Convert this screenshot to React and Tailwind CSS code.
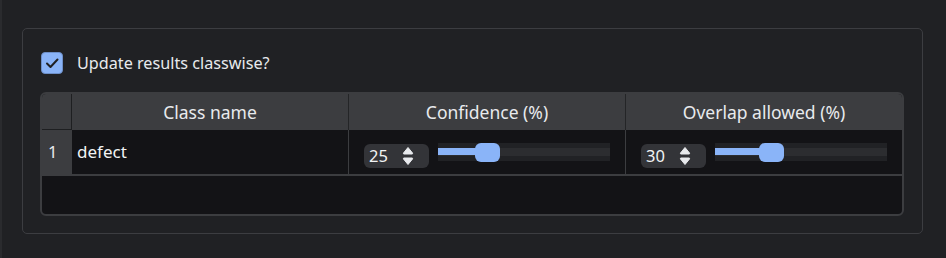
import React from "react";

const font = { fontFamily: '"Noto Sans", "Open Sans", sans-serif' };

function SpinBox({ value }) {
  return (
    <div className="mt-[8px] w-[65px] h-[24px] rounded-[6px] bg-[#333438] flex items-center justify-between pl-[5px] pr-[15px] shrink-0">
      <span className="text-[16.5px] text-[#f1f3f4] leading-none">{value}</span>
      <svg width="12" height="20" viewBox="0 0 12 20">
        <path d="M6 1.5 L10.5 7 Q11 8 10 8 L2 8 Q1 8 1.5 7 Z" fill="#e8eaed" stroke="#e8eaed" strokeWidth="1" strokeLinejoin="round" />
        <path d="M6 18.5 L10.5 13 Q11 12 10 12 L2 12 Q1 12 1.5 13 Z" fill="#e8eaed" stroke="#e8eaed" strokeWidth="1" strokeLinejoin="round" />
      </svg>
    </div>
  );
}

function Slider({ value }) {
  const travel = 172 - 25;
  const left = Math.round((value / 100) * travel);
  return (
    <div className="relative w-[172px] h-[18px] bg-[#212225] shrink-0">
      <div className="absolute left-0 right-0 top-[5px] h-[8px] bg-[#2c2d30]" />
      <div className="absolute left-0 top-[5px] h-[7px] bg-[#8ab4f8]" style={{ width: left + 4 }} />
      <div
        className="absolute top-0 w-[25px] h-[19px] rounded-[6px] bg-[#8ab4f8]"
        style={{ left }}
      />
    </div>
  );
}

export default function App() {
  return (
    <div
      className="w-[946px] h-[258px] bg-[#202124] border-l-[2px] border-[#2a2b2e] pl-[20px] pt-[28px] overflow-hidden"
      style={font}
    >
      <div className="w-[901px] h-[206px] border border-[#3c3d41] rounded-[5px] pt-[23px] pl-[17px]">
        <div className="flex items-center gap-[14px] ml-[1px] h-[22px]">
          <div className="w-[22px] h-[22px] rounded-[4px] bg-[#8ab4f8] border border-[#6d8fc8] flex items-center justify-center">
            <svg width="16" height="16" viewBox="0 0 16 16">
              <path d="M3 8.5 L6.5 12 L13.5 4.5" fill="none" stroke="#202124" strokeWidth="2" strokeLinecap="round" strokeLinejoin="round" />
            </svg>
          </div>
          <span className="text-[16.2px] text-[#e8eaed] leading-none">Update results classwise?</span>
        </div>

        <div className="mt-[18px] w-[864px] h-[124px] border-2 border-[#3c3d40] rounded-[6px] bg-[#131316] overflow-hidden flex flex-col">
          {/* header */}
          <div className="flex h-[36px] bg-[#3c3d40] shrink-0">
            <div className="w-[30px] border-r border-b border-[#1e1f21]" />
            <div className="w-[277px] border-r border-[#242527] flex items-center justify-center text-[17.5px] text-[#e8eaed]">
              Class name
            </div>
            <div className="w-[277px] border-r border-[#242527] flex items-center justify-center text-[17.5px] text-[#e8eaed]">
              Confidence (%)
            </div>
            <div className="w-[276px] flex items-center justify-center text-[17.5px] text-[#e8eaed]">
              Overlap allowed (%)
            </div>
          </div>
          {/* row */}
          <div className="flex h-[46px] border-b-2 border-[#3c3d40] shrink-0">
            <div className="w-[30px] bg-[#3c3d40] border-r border-[#3c3d40] flex items-center pl-[6px] text-[16.5px] text-[#e8eaed]">
              1
            </div>
            <div className="w-[277px] border-r border-[#3c3d40] flex items-center pl-[5px] text-[17px] text-[#f1f3f4]">
              defect
            </div>
            <div className="w-[277px] border-r border-[#3c3d40] flex items-center pl-[15px] gap-[9px]">
              <SpinBox value={25} />
              <Slider value={25} />
            </div>
            <div className="w-[276px] flex items-center pl-[15px] gap-[9px]">
              <SpinBox value={30} />
              <Slider value={30} />
            </div>
          </div>
          <div className="flex-1" />
        </div>
      </div>
    </div>
  );
}
